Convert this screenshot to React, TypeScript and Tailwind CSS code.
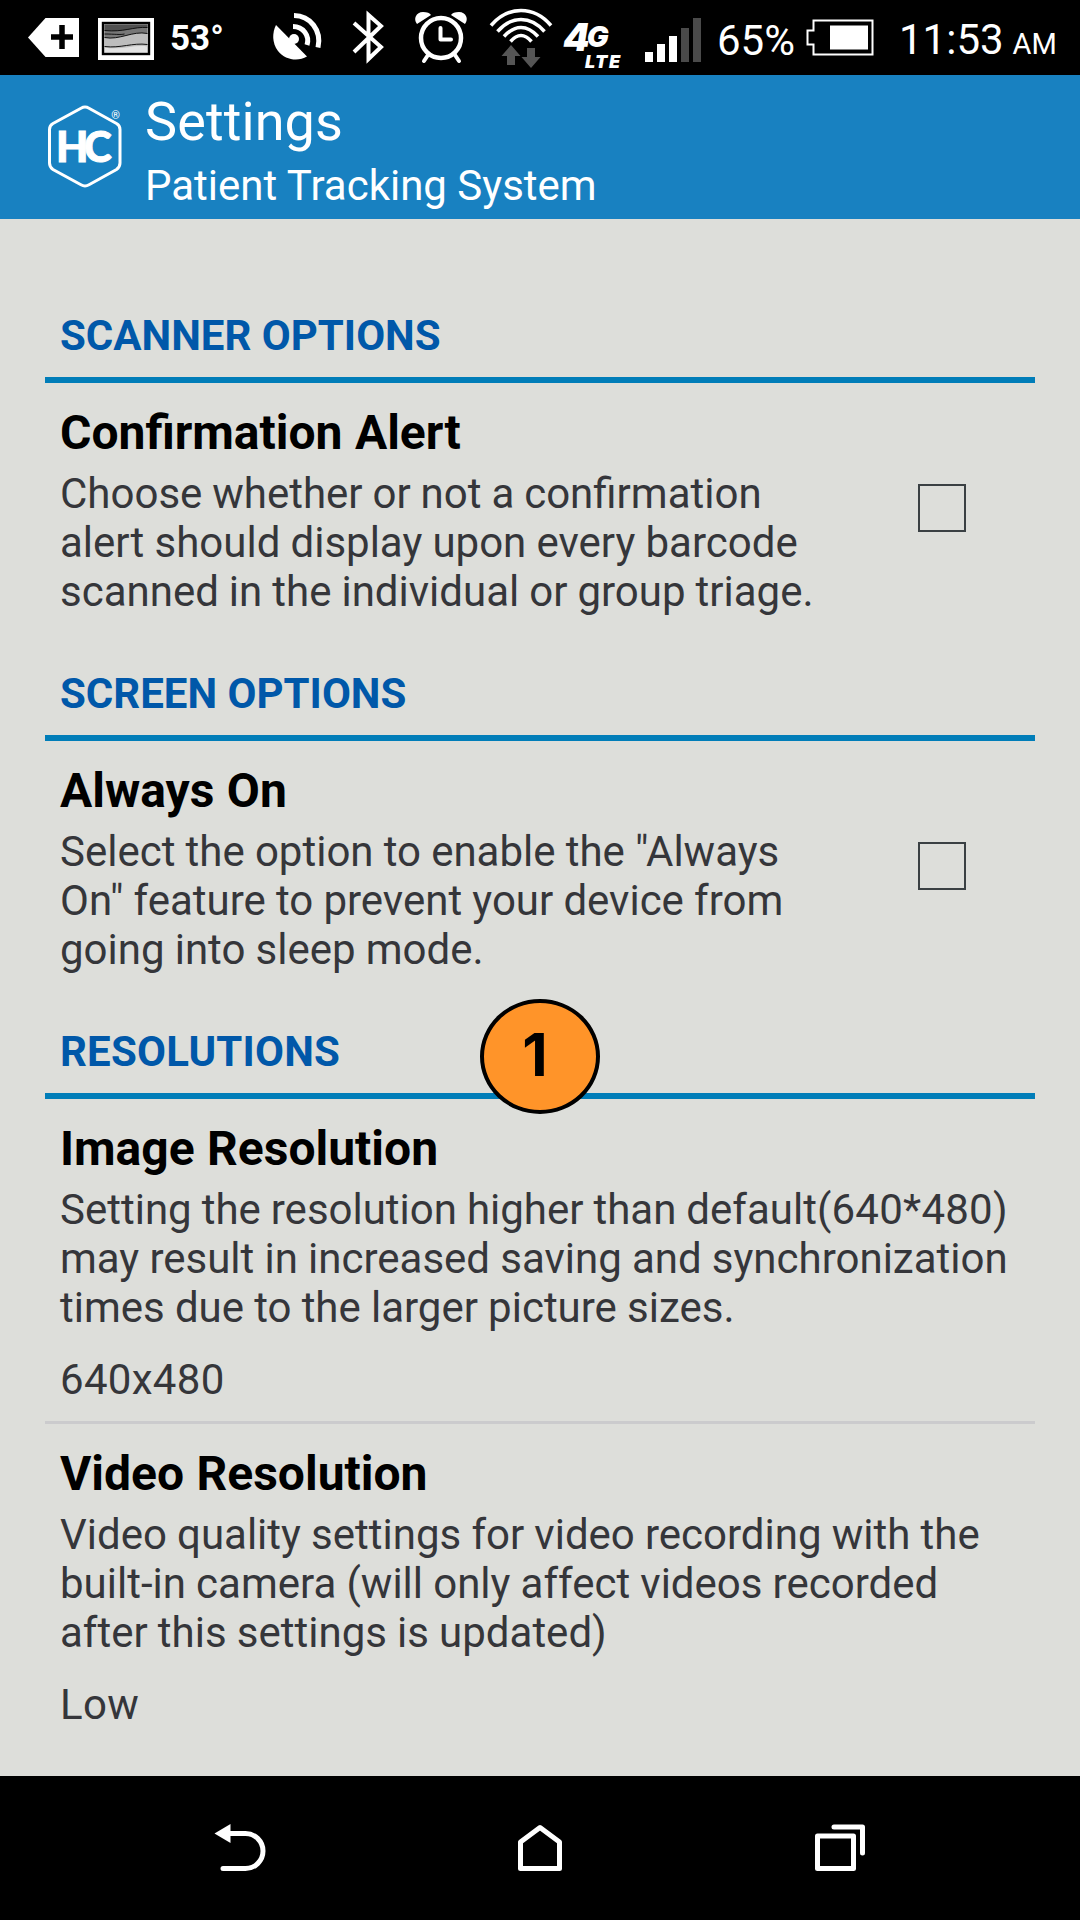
import React from "react";

function NotificationIcons() {
  return (
    <svg className="shrink-0" width="170" height="75" viewBox="0 0 170 75" fill="none">
      <path d="M28 37.5 45.5 18H79v39H45.5Z" fill="#fff" />
      <path d="M62 25v24M51 37h22" stroke="#000" strokeWidth="5.5" />
      <rect x="98" y="18" width="56" height="42" fill="#fff" />
      <rect x="103" y="23" width="46" height="31" fill="#e2e2e2" stroke="#000" strokeWidth="2.4" />
      <path d="M104.500 24.500h43v22c-14-2-27 4-43 1Z" fill="#bdbdbd" />
      <path d="M104.500 24.500h43v9c-15-3-28 7-43 4Z" fill="#777" />
      <path d="M104.500 24.500h43v3c-14-1-22 5-43 3Z" fill="#505050" />
      <path d="M104.500 30.500c19 2 29-4 43-3M104.500 34c10 0 16 1 20 0M104.500 37.500c15 3 28-7 43-4M104.500 46.500c16 2 28-4 43-2" stroke="#111" strokeWidth="1" />
    </svg>
  );
}

function ConnectionIcons() {
  return (
    <svg className="shrink-0" width="312" height="75" viewBox="251 0 312 75" fill="none">
      <path d="M276 25 307 56.500C298 62 285 60 278 51 272 43 272 33 276 25Z" fill="#fff" />
      <circle cx="294" cy="39" r="5" fill="#fff" />
      <path d="m285 48 8-8" stroke="#fff" strokeWidth="4" />
      <path d="M293 26.500c10 0 17 9 14 18.500M294 15.500c16 0 28 15 24 32" stroke="#fff" strokeWidth="5" />
      <path d="m354 23 27 24-12.500 12V15L381 26 354 52" stroke="#fff" strokeWidth="4" />
      <circle cx="441" cy="38" r="20" stroke="#fff" strokeWidth="4.500" />
      <path d="M440.500 28v11.500H451" stroke="#fff" strokeWidth="4" strokeLinecap="round" strokeLinejoin="round" />
      <path d="m428 55-4 6m31-6 4 6" stroke="#fff" strokeWidth="4" strokeLinecap="round" />
      <path d="M417 24c-4-5-1-12 6-12 4 0 7 1 8 3ZM465 24c4-5 1-12-6-12-4 0-7 1-8 3Z" fill="#fff" />
      <path d="M491 25.500c17-20 43-20 60 0M497.500 31.500c14-16 33-16 47 0M504 36.500c11-12 23-12 34 0M510.500 41.500c7-8 14-8 21 0" stroke="#fff" strokeWidth="3.500" />
      <path d="m511 45 9.500 11H515v9h-8v-9h-5.500ZM527 48h8v9h5.500L531 68l-9.500-11h5.500Z" fill="#555" />
    </svg>
  );
}

function StatusBar() {
  return (
    <div className="flex h-[75px] items-center bg-black text-white">
      <NotificationIcons />
      <span className="w-[81px] shrink-0 pt-0.5 text-[35px] leading-[36px] font-bold">53°</span>
      <ConnectionIcons />
      <div className="flex w-[71px] shrink-0 flex-col pt-[15px] font-['Inter'] font-black italic">
        <div className="flex h-[33px] items-start">
          <span className="text-[38px] leading-[34px] tracking-[-3px]">4</span>
          <span className="pt-0.5 text-[29px] leading-[30px]">G</span>
        </div>
        <span className="pl-[22px] text-[18px] leading-[17px] tracking-[1.5px]">LTE</span>
      </div>
      <svg className="shrink-0" width="83" height="75" viewBox="634 0 83 75">
        <path d="M645 52h8v10h-8zM657 44h8v18h-8zM669 36h8v26h-8z" fill="#fff" />
        <path d="M681 28h8v34h-8zM693 18h8v44h-8z" fill="#4a4a4a" />
      </svg>
      <span className="w-[83px] shrink-0 pt-1.5 text-[42px] leading-[49px]">65%</span>
      <svg className="shrink-0" width="99" height="75" viewBox="800 0 99 75" fill="none">
        <path d="M813.500 20.500h59v34h-59v-10h-6v-14h6Z" stroke="#fff" strokeWidth="2" />
        <path d="M830 25.500h38v24h-38z" fill="#fff" />
      </svg>
      <div className="flex items-baseline gap-[9px] pt-1.5 whitespace-nowrap">
        <span className="text-[42px] leading-[49px]">11:53</span>
        <span className="text-[29px]">AM</span>
      </div>
    </div>
  );
}

function Logo() {
  return (
    <div className="relative h-[102px] w-[76px] shrink-0">
      <svg width="76" height="102" viewBox="0 0 76 102" fill="none">
        <path d="M34 3.200q4-2.300 8 0L69.500 18.500q3.500 2 3.500 6v33.500q0 4-3.500 6.500L42 79.800q-4 2.300-8 0L6 64.500Q2.500 62 2.500 58V24.500q0-4 3.500-6Z" stroke="#fff" strokeWidth="3" />
      </svg>
      <span className="absolute inset-x-0 top-[20px] pl-[9px] font-['Lato'] text-[42px] leading-[42px] font-black tracking-[-4.5px] [-webkit-text-stroke:0.9px_white]">HC</span>
      <span className="absolute top-[5px] right-[3px] text-[11px] leading-[11px]">®</span>
    </div>
  );
}

function SectionHeader({ children }: { children: React.ReactNode }) {
  return (
    <h2 className="h-[72px] border-b-[6px] border-[#007db8] px-[15px] text-[42px] leading-[49px] font-bold text-[#0058a9]">
      {children}
    </h2>
  );
}

type ItemProps = { title: string; lines: React.ReactNode[]; value?: string; checkbox?: boolean };

function Item({ title, lines, value, checkbox }: ItemProps) {
  return (
    <div className="flex items-center justify-between pt-[21px] pl-[15px]">
      <div>
        <h3 className="text-[48px] leading-[57px] font-bold text-black [word-spacing:0.5px]">{title}</h3>
        <p className="mt-2 text-[42px] leading-[49px] whitespace-nowrap text-[#35363a] [word-spacing:-0.25px]">
          {lines.map((line, i) => (
            <span key={i} className="block">{line}</span>
          ))}
        </p>
        {value && <p className="mt-[23px] text-[42px] leading-[49px] tracking-[0.3px] text-[#35363a]">{value}</p>}
      </div>
      {checkbox && <div className="mr-[69px] mb-1 size-12 border-2 border-[#3a4043]" />}
    </div>
  );
}

function NavBar() {
  return (
    <nav className="flex h-36 items-center justify-center gap-[246px] bg-black">
      <svg width="54" height="52" viewBox="0 0 54 52" fill="none">
        <path d="M15 11.500h17.500a17.500 17.500 0 0 1 0 35H10" stroke="#fff" strokeWidth="5" strokeLinecap="round" />
        <path d="M1.500 11.500 17.500 2v19Z" fill="#fff" />
      </svg>
      <svg width="54" height="52" viewBox="0 0 54 52" fill="none">
        <path d="M27 5.500 46.500 20v26.500h-39V20Z" stroke="#fff" strokeWidth="5" strokeLinejoin="round" />
      </svg>
      <svg width="54" height="52" viewBox="0 0 54 52" fill="none">
        <path d="M4.500 14h36v32.500h-36zM21 5h28.500v26" stroke="#fff" strokeWidth="5" strokeLinejoin="round" strokeLinecap="round" />
      </svg>
    </nav>
  );
}

export default function App() {
  return (
    <div className="flex h-[1920px] w-[1080px] flex-col overflow-hidden bg-[#dddeda] font-['Roboto',sans-serif]">
      <StatusBar />
      <header className="flex h-36 gap-[22px] bg-[#1881c1] pt-[15px] pl-[47px] text-white">
        <div className="pt-[15px]">
          <Logo />
        </div>
        <div>
          <h1 className="text-[54px] leading-[63px] tracking-[0.1px]">Settings</h1>
          <p className="mt-2 text-[42px] leading-[49px]">Patient Tracking System</p>
        </div>
      </header>
      <main className="flex-1 px-[45px] pt-[92px]">
        <section className="h-[358px]">
          <SectionHeader>SCANNER OPTIONS</SectionHeader>
          <Item
            title="Confirmation Alert"
            checkbox
            lines={[
              <span className="[word-spacing:-0.5px]">Choose whether or not a confirmation</span>,
              "alert should display upon every barcode",
              <span className="[word-spacing:-0.4px]">scanned in the individual or group triage.</span>,
            ]}
          />
        </section>
        <section className="h-[358px]">
          <SectionHeader>SCREEN OPTIONS</SectionHeader>
          <Item title="Always On" checkbox lines={['Select the option to enable the "Always', 'On" feature to prevent your device from', "going into sleep mode."]} />
        </section>
        <section className="relative">
          <SectionHeader><span className="tracking-[0.2px]">RESOLUTIONS</span></SectionHeader>
          <div className="absolute top-[-28px] left-[435px] flex h-[115px] w-[120px] items-center justify-center rounded-[50%] border-4 border-black bg-[#ff9429] pr-2.5 pb-1 font-['Inter'] text-[59px] leading-none font-bold text-black">
            1
          </div>
          <div className="border-b-[3px] border-[#cbcbcd] pb-[17px]">
            <Item
              title="Image Resolution"
              value="640x480"
              lines={[
                <span className="[word-spacing:-0.45px]">Setting the resolution higher than default<span className="tracking-[0.25px]">(640*480)</span></span>,
                "may result in increased saving and synchronization",
                "times due to the larger picture sizes.",
              ]}
            />
          </div>
          <Item title="Video Resolution" value="Low" lines={["Video quality settings for video recording with the", "built-in camera (will only affect videos recorded", "after this settings is updated)"]} />
        </section>
      </main>
      <NavBar />
    </div>
  );
}
